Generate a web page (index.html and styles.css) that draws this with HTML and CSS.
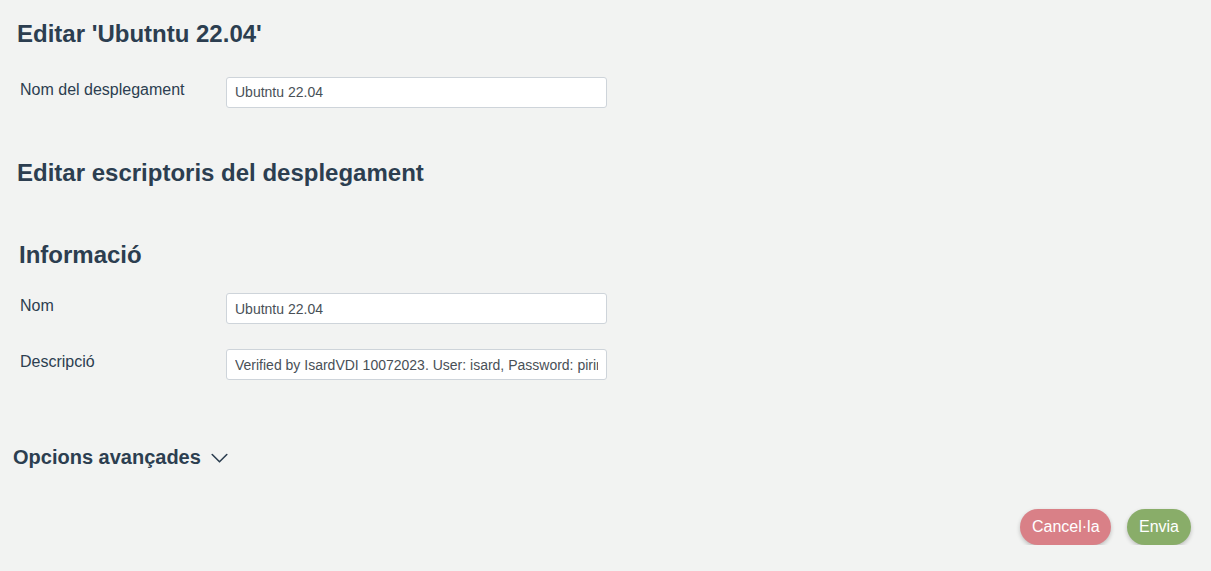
FILE: index.html
```html
<!DOCTYPE html>
<html lang="ca">
<head>
<meta charset="utf-8">
<title>Editar desplegament</title>
<link rel="stylesheet" href="styles.css">
</head>
<body>
<main class="page">
  <h1 class="title title-main">Editar 'Ubutntu 22.04'</h1>
  <div class="form-row row-first">
    <label class="form-label" for="dep-name">Nom del desplegament</label>
    <input class="form-input" id="dep-name" type="text" value="Ubutntu 22.04">
  </div>

  <h2 class="title title-section">Editar escriptoris del desplegament</h2>

  <h3 class="title title-info">Informació</h3>
  <div class="form-row row-nom">
    <label class="form-label" for="desk-name">Nom</label>
    <input class="form-input" id="desk-name" type="text" value="Ubutntu 22.04">
  </div>
  <div class="form-row row-desc">
    <label class="form-label" for="desk-desc">Descripció</label>
    <input class="form-input" id="desk-desc" type="text" value="Verified by IsardVDI 10072023. User: isard, Password: pirineus">
  </div>

  <div class="advanced">
    <span class="advanced-text">Opcions avançades</span>
    <svg class="chevron" width="17" height="12" viewBox="0 0 17 12" aria-hidden="true">
      <polyline points="1.2,2.5 8.5,9.8 15.8,2.5" fill="none" stroke="#2c3e50" stroke-width="1.6" stroke-linecap="round" stroke-linejoin="round"/>
    </svg>
  </div>

  <div class="actions">
    <button class="btn btn-cancel" type="button">Cancel·la</button>
    <button class="btn btn-submit" type="button">Envia</button>
  </div>
</main>
</body>
</html>
```

FILE: styles.css
```css
html, body {
  margin: 0;
  padding: 0;
  background: #f2f3f2;
}

body {
  font-family: "Liberation Sans", Arial, sans-serif;
  color: #2c3e50;
  font-size: 16px;
}

.page {
  padding: 20px 0 0 0;
  display: flex;
  flex-direction: column;
}

.title {
  margin: 0;
  font-size: 24px;
  font-weight: 700;
  line-height: 1.2;
  color: #2c3e50;
}

.title-main {
  padding-left: 17px;
}

.title-section {
  padding-left: 17px;
  margin-top: 51px;
}

.title-info {
  padding-left: 19px;
  margin-top: 53px;
}

.form-row {
  display: flex;
  align-items: flex-start;
  padding-left: 20px;
}

.row-first {
  margin-top: 28px;
}

.row-nom {
  margin-top: 24px;
}

.row-desc {
  margin-top: 25px;
}

.form-label {
  width: 206px;
  flex: none;
  font-size: 16px;
  line-height: 24px;
  padding-top: 1px;
  color: #2c3e50;
}

.form-input {
  box-sizing: border-box;
  width: 381px;
  height: 31px;
  margin: 0;
  padding: 4px 8px;
  font-family: "Liberation Sans", Arial, sans-serif;
  font-size: 14px;
  line-height: 21px;
  color: #495057;
  background: #ffffff;
  border: 1px solid #ced4da;
  border-radius: 3px;
  outline: none;
}

.advanced {
  margin-top: 65px;
  padding-left: 13px;
  display: flex;
  align-items: center;
  gap: 10px;
  height: 24px;
}

.advanced-text {
  font-size: 20px;
  font-weight: 700;
  line-height: 24px;
  color: #2c3e50;
}

.chevron {
  display: block;
  margin-top: 1px;
}

.actions {
  margin-top: 40px;
  display: flex;
  justify-content: flex-end;
  gap: 16px;
  padding-right: 20px;
}

.btn {
  font-family: "Liberation Sans", Arial, sans-serif;
  font-size: 16px;
  line-height: 24px;
  padding: 6px 12px;
  border: none;
  border-radius: 18px;
  color: #ffffff;
  box-shadow: 0 2px 4px rgba(0, 0, 0, 0.22);
  cursor: pointer;
}

.btn-cancel {
  background: #d98087;
  width: 91px;
}

.btn-submit {
  background: #89ad69;
}
```
